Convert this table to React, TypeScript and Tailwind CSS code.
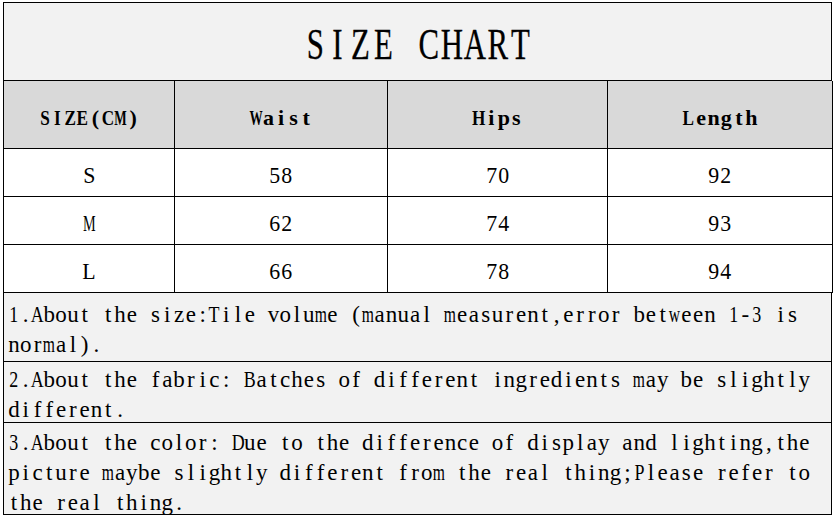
import React from "react";

const serif = { fontFamily: '"Liberation Serif", "Times New Roman", serif' } as const;

function Mono({ text, cell, lower, upper, wide }: { text: string; cell: string; lower: string; upper: string; wide: string }) {
  return (
    <span className="inline-flex whitespace-pre">
      {text.split("").map((ch, i) => {
        const s = "mwMW".includes(ch) ? wide : /[A-Z0-9]/.test(ch) ? upper : lower;
        return (
          <span key={i} className={"inline-flex justify-center " + cell}>
            <span className={"inline-block whitespace-pre " + s}>{ch}</span>
          </span>
        );
      })}
    </span>
  );
}

const rows = [
  ["S", "58", "70", "92"],
  ["M", "62", "74", "93"],
  ["L", "66", "78", "94"],
];

const notes: { lines: string[]; h: string; pt: string }[] = [
  { lines: ["1.About the size:Tile volume (manual measurent,error between 1-3 is", "normal)."], h: "h-[69px]", pt: "pt-[7px]" },
  { lines: ["2.About the fabric: Batches of different ingredients may be slightly", "different."], h: "h-[61px]", pt: "pt-[3px]" },
  { lines: ["3.About the color: Due to the difference of display and lighting,the", "picture maybe slightly different from the real thing;Please refer to", "the real thing."], h: "h-[92px]", pt: "pt-[5px]" },
];

export default function App() {
  return (
    <div className="w-[835px] h-[519px] bg-white pl-[3px] pt-[2px]" style={serif}>
      <div className="w-[829px] border-l border-t border-black text-black">
        <div className="h-[78px] bg-[#f2f2f2] border-r border-b border-black flex items-center justify-center pt-[6px]">
          <span className="text-[44px] leading-none [-webkit-text-stroke:0.3px_black]">
            <Mono text="SIZE CHART" cell="w-[22.8px]" lower="scale-x-[0.7]" upper="scale-x-[0.7]" wide="scale-x-[0.7]" />
          </span>
        </div>
        <div className="grid grid-cols-[171px_213px_220px_225px]">
          {["SIZE(CM)", "Waist", "Hips", "Length"].map((h) => (
            <div key={h} className="h-[68px] bg-[#d9d9d9] border-r border-b border-black flex items-center justify-center pt-[6px]">
              <span className="text-[22px] font-bold leading-none">
                <Mono text={h} cell="w-[12.6px]" lower="scale-x-[1]" upper="scale-x-[0.78]" wide="scale-x-[0.6]" />
              </span>
            </div>
          ))}
          {rows.map((r) =>
            r.map((c, i) => (
              <div key={r[0] + i} className="h-[48px] bg-white border-r border-b border-black flex items-center justify-center pt-[5px]">
                <span className="text-[23px] leading-none">
                  <Mono text={c} cell="w-[11.8px]" lower="scale-x-[1]" upper="scale-x-[0.95]" wide="scale-x-[0.62]" />
                </span>
              </div>
            ))
          )}
        </div>
        {notes.map((n, i) => (
          <div key={i} className={"bg-[#f2f2f2] border-r border-b border-black pl-[4px] " + n.h + " " + n.pt}>
            {n.lines.map((l, j) => (
              <div key={j} className="h-[30px] leading-[30px] text-[23px]">
                <Mono text={l} cell="w-[11.8px]" lower="scale-x-[1]" upper="scale-x-[0.78]" wide="scale-x-[0.68]" />
              </div>
            ))}
          </div>
        ))}
      </div>
    </div>
  );
}
